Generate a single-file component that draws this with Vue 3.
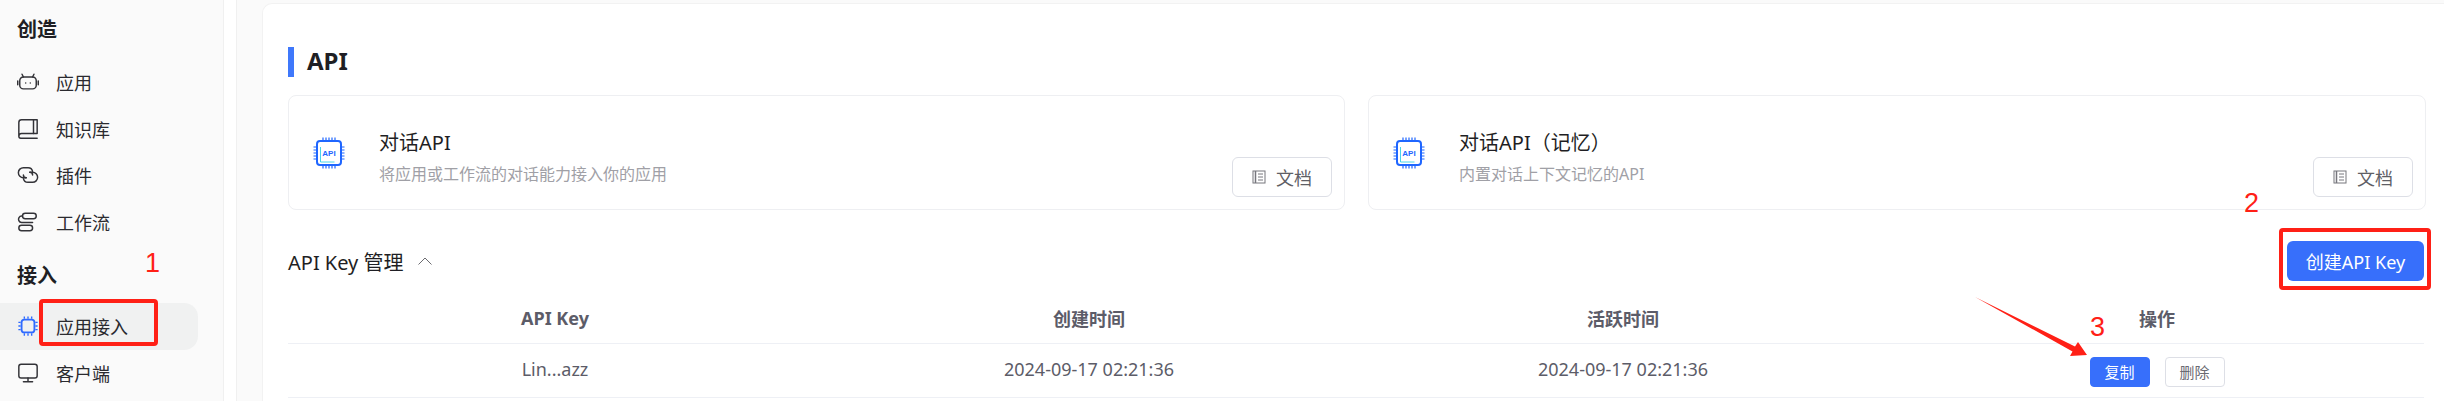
<template>
  <div class="page">
    <aside class="sidebar">
      <div class="group-title">创造</div>
      <div v-for="item in createItems" :key="item.label" class="nav-item">
        <svg class="nav-icon" viewBox="0 0 24 24" fill="none" stroke="#333338" stroke-width="1.6" stroke-linecap="round" stroke-linejoin="round">
          <path v-for="d in item.paths" :key="d" :d="d" />
        </svg>
        <span>{{ item.label }}</span>
      </div>
      <div class="group-title second">接入</div>
      <div class="nav-item active">
        <svg class="nav-icon" viewBox="0 0 24 24" fill="none" stroke="#2f6bff" stroke-width="2">
          <rect x="5" y="5" width="14" height="14" rx="3" />
          <path d="M8 1.5V4M12 1.5V4M16 1.5V4M8 20v2.5M12 20v2.5M16 20v2.5M1.5 8H4M1.5 12H4M1.5 16H4M20 8h2.5M20 12h2.5M20 16h2.5" stroke-width="1.5" />
        </svg>
        <span>应用接入</span>
      </div>
      <div class="nav-item">
        <svg class="nav-icon" viewBox="0 0 24 24" fill="none" stroke="#333338" stroke-width="1.6" stroke-linecap="round" stroke-linejoin="round">
          <rect x="2" y="2.5" width="20" height="15" rx="2.5" />
          <path d="M12 17.5v4M7 21.5h10" />
        </svg>
        <span>客户端</span>
      </div>
    </aside>
    <div class="gutter"></div>

    <main class="main">
      <section class="panel">
        <h2 class="heading">API</h2>
        <div class="api-cards">
          <div v-for="card in apiCards" :key="card.title" class="api-card">
            <svg class="chip" viewBox="0 0 32 32" fill="none">
              <rect x="4" y="4" width="24" height="24" rx="3" stroke="#1f66ff" stroke-width="2" />
              <path d="M10 .5V3M13 .5V3M16 .5V3M19 .5V3M22 .5V3M10 29v2.5M13 29v2.5M16 29v2.5M19 29v2.5M22 29v2.5M.5 10H3M.5 13H3M.5 16H3M.5 19H3M.5 22H3M29 10h2.5M29 13h2.5M29 16h2.5M29 19h2.5M29 22h2.5" stroke="#1f66ff" stroke-width="1.2" />
              <path d="M7.5 10v15h14" stroke="#35cfe8" stroke-width="0.9" />
              <text x="16" y="19" text-anchor="middle" class="chip-text">API</text>
            </svg>
            <div class="api-text">
              <div class="api-title">{{ card.title }}</div>
              <div class="api-desc">{{ card.desc }}</div>
            </div>
            <button class="doc-btn">
              <svg class="doc-icon" viewBox="0 0 14 14" fill="none" stroke="#77777d" stroke-width="1">
                <rect x="1" y="1" width="12" height="12" />
                <path d="M3.5 1v12" stroke-width="1.5" />
                <path d="M6 4h5M6 7h5M6 10h5" />
              </svg>
              <span>文档</span>
            </button>
          </div>
        </div>

        <div class="key-head">
          <div class="key-title">
            <span>API Key 管理</span>
            <svg class="chevron" viewBox="0 0 14 8" fill="none" stroke="#6b6b70" stroke-width="1">
              <path d="M.5 7.5 7 1l6.5 6.5" />
            </svg>
          </div>
          <button class="create-btn">创建API Key</button>
        </div>

        <div class="table">
          <div class="row head">
            <div v-for="col in columns" :key="col">{{ col }}</div>
          </div>
          <div class="row body">
            <div>Lin...azz</div>
            <div>2024-09-17 02:21:36</div>
            <div>2024-09-17 02:21:36</div>
            <div class="actions">
              <button class="small primary">复制</button>
              <button class="small">删除</button>
            </div>
          </div>
        </div>
      </section>
    </main>

    <!-- red annotations drawn over the screenshot -->
    <div class="mark box-one"></div>
    <div class="mark box-two"></div>
    <span class="num num-one">1</span>
    <span class="num num-two">2</span>
    <span class="num num-three">3</span>
    <svg class="arrow" viewBox="0 0 120 80">
      <path d="M5 7 105 56.5 108 52 117 65 100 66 102.5 61.5Z" fill="#ff2016" />
    </svg>
  </div>
</template>

<script setup>
const createItems = [
  {
    label: '应用',
    paths: [
      'M7 6.5h10a4 4 0 0 1 4 4v5a4 4 0 0 1-4 4H7a4 4 0 0 1-4-4v-5a4 4 0 0 1 4-4Z',
      'M7 6.5 5.5 3.5M17 6.5 18.5 3.5M.8 11v4M23.2 11v4M9.5 13v.2M14.5 13v.2',
    ],
  },
  {
    label: '知识库',
    paths: [
      'M2 20V5a3 3 0 0 1 3-3h17v15H5a3 3 0 0 0-3 3 2 2 0 0 0 2 2h18',
      'M18 2v15',
    ],
  },
  {
    label: '插件',
    paths: [
      'M10 15H7a5 5 0 0 1 0-11h5a5 5 0 0 1 5 4',
      'M14 9h3a5 5 0 0 1 0 11h-5a5 5 0 0 1-5-4',
      'M14 9a3 3 0 0 1 3 3M10 15a3 3 0 0 1-3-3',
    ],
  },
  {
    label: '工作流',
    paths: [
      'M9 2.5h9a3 3 0 0 1 0 6H9a3 3 0 0 1 0-6Z',
      'M5 15.5h9a3 3 0 0 1 0 6H5a3 3 0 0 1 0-6Z',
      'M6 5.5H5a3.5 3.5 0 0 0-3 5 3.5 3.5 0 0 0 3 2h12',
    ],
  },
]

const apiCards = [
  { title: '对话API', desc: '将应用或工作流的对话能力接入你的应用' },
  { title: '对话API（记忆）', desc: '内置对话上下文记忆的API' },
]

const columns = ['API Key', '创建时间', '活跃时间', '操作']
</script>

<style>
html,
body {
  margin: 0;
  background: #fff;
}
</style>

<style scoped>
.page {
  position: relative;
  display: flex;
  width: 2444px;
  height: 401px;
  overflow: hidden;
  font-family: "Noto Sans", "Noto Sans CJK SC", sans-serif;
  color: #1f1f24;
}

.sidebar {
  box-sizing: border-box;
  width: 224px;
  flex: none;
  padding-top: 15px;
  background: #fafafa;
  border-right: 1px solid #f0f0f0;
}

.group-title {
  padding-left: 17px;
  height: 30px;
  margin-bottom: 14px;
  font-size: 20px;
  line-height: 30px;
  font-weight: 700;
}

.group-title.second {
  margin-top: 16px;
  margin-bottom: 12px;
}

.nav-item {
  display: flex;
  align-items: center;
  gap: 17px;
  width: 198px;
  height: 46.5px;
  padding-left: 17px;
  box-sizing: border-box;
  font-size: 18px;
  color: #2a2a2f;
}

.nav-item.active {
  background: #f0f1f1;
  border-radius: 0 14px 14px 0;
}

.nav-icon {
  width: 22px;
  height: 22px;
  flex: none;
}

.gutter {
  box-sizing: border-box;
  width: 13px;
  flex: none;
  background: #fff;
  border-right: 1px solid #f0f0f0;
}

.main {
  flex: 1;
  box-sizing: border-box;
  padding: 3px 0 0 25px;
  background: #fafafa;
}

.panel {
  box-sizing: border-box;
  height: 100%;
  padding: 43px 18px 0 25px;
  background: #fff;
  border: 1px solid #f2f2f2;
  border-width: 1px 0 0 1px;
  border-radius: 10px 0 0 0;
}

.heading {
  margin: 0 0 18px;
  padding-left: 13px;
  height: 30px;
  font-size: 24px;
  line-height: 28px;
  font-weight: 700;
  border-left: 6px solid #3f78fb;
}

.api-cards {
  display: grid;
  grid-template-columns: 1057px 1fr;
  gap: 23px;
}

.api-card {
  position: relative;
  box-sizing: border-box;
  height: 115px;
  padding: 33px 0 0 24px;
  display: flex;
  border: 1px solid #eeeff2;
  border-radius: 8px;
}

.chip {
  width: 32px;
  height: 32px;
  margin-top: 8px;
  flex: none;
}

.chip-text {
  font-family: "Liberation Sans", sans-serif;
  font-size: 8px;
  font-weight: 700;
  fill: #1f66ff;
}

.api-text {
  margin-left: 34px;
}

.api-title {
  font-size: 20px;
  line-height: 28px;
}

.api-desc {
  margin-top: 5px;
  font-size: 16px;
  line-height: 24px;
  color: #a0a0a6;
}

.doc-btn {
  position: absolute;
  right: 12px;
  bottom: 12px;
  box-sizing: border-box;
  width: 100px;
  height: 40px;
  display: flex;
  align-items: center;
  justify-content: center;
  gap: 10px;
  background: #fff;
  border: 1px solid #dddfe6;
  border-radius: 6px;
  font: inherit;
  font-size: 18px;
  color: #5f5f66;
}

.doc-icon {
  width: 14px;
  height: 14px;
}

.key-head {
  display: flex;
  align-items: center;
  justify-content: space-between;
  height: 40px;
  margin-top: 31px;
  padding-right: 2px;
}

.key-title {
  display: flex;
  align-items: center;
  gap: 14px;
  font-size: 20px;
}

.chevron {
  width: 14px;
  height: 8px;
}

.create-btn {
  box-sizing: border-box;
  width: 137px;
  height: 40px;
  background: #376ffb;
  border: 0;
  border-radius: 6px;
  font: inherit;
  font-size: 18px;
  color: #fff;
}

.table {
  margin-right: 2px;
  margin-top: 16px;
}

.row {
  display: grid;
  grid-template-columns: repeat(4, 1fr);
  text-align: center;
  align-items: center;
  border-bottom: 1px solid #eef0f5;
  font-size: 18px;
  color: #5c5c68;
}

.row > div {
  padding-bottom: 4px;
}

.row.head {
  height: 46px;
  font-weight: 700;
}

.row.body {
  height: 53px;
}

.row > .actions {
  display: flex;
  justify-content: center;
  gap: 15px;
  padding: 2px 0 0;
}

.small {
  box-sizing: border-box;
  width: 60px;
  height: 30px;
  padding: 0;
  background: #fff;
  border: 1px solid #dddfe6;
  border-radius: 4px;
  font: inherit;
  font-size: 15px;
  color: #6a6a72;
}

.small.primary {
  background: #376ffb;
  border-color: #376ffb;
  color: #fff;
}

.mark {
  position: absolute;
  box-sizing: border-box;
  border: 4px solid #ff2016;
  border-radius: 4px;
}

.box-one {
  left: 39px;
  top: 299px;
  width: 119px;
  height: 47px;
}

.box-two {
  left: 2279px;
  top: 228px;
  width: 152px;
  height: 62px;
}

.num {
  position: absolute;
  font-family: "Liberation Sans", sans-serif;
  font-size: 27px;
  line-height: 27px;
  color: #ff2016;
}

.num-one {
  left: 145px;
  top: 250px;
}

.num-two {
  left: 2244px;
  top: 190px;
}

.num-three {
  left: 2090px;
  top: 314px;
}

.arrow {
  position: absolute;
  left: 1970px;
  top: 290px;
  width: 120px;
  height: 80px;
}
</style>
